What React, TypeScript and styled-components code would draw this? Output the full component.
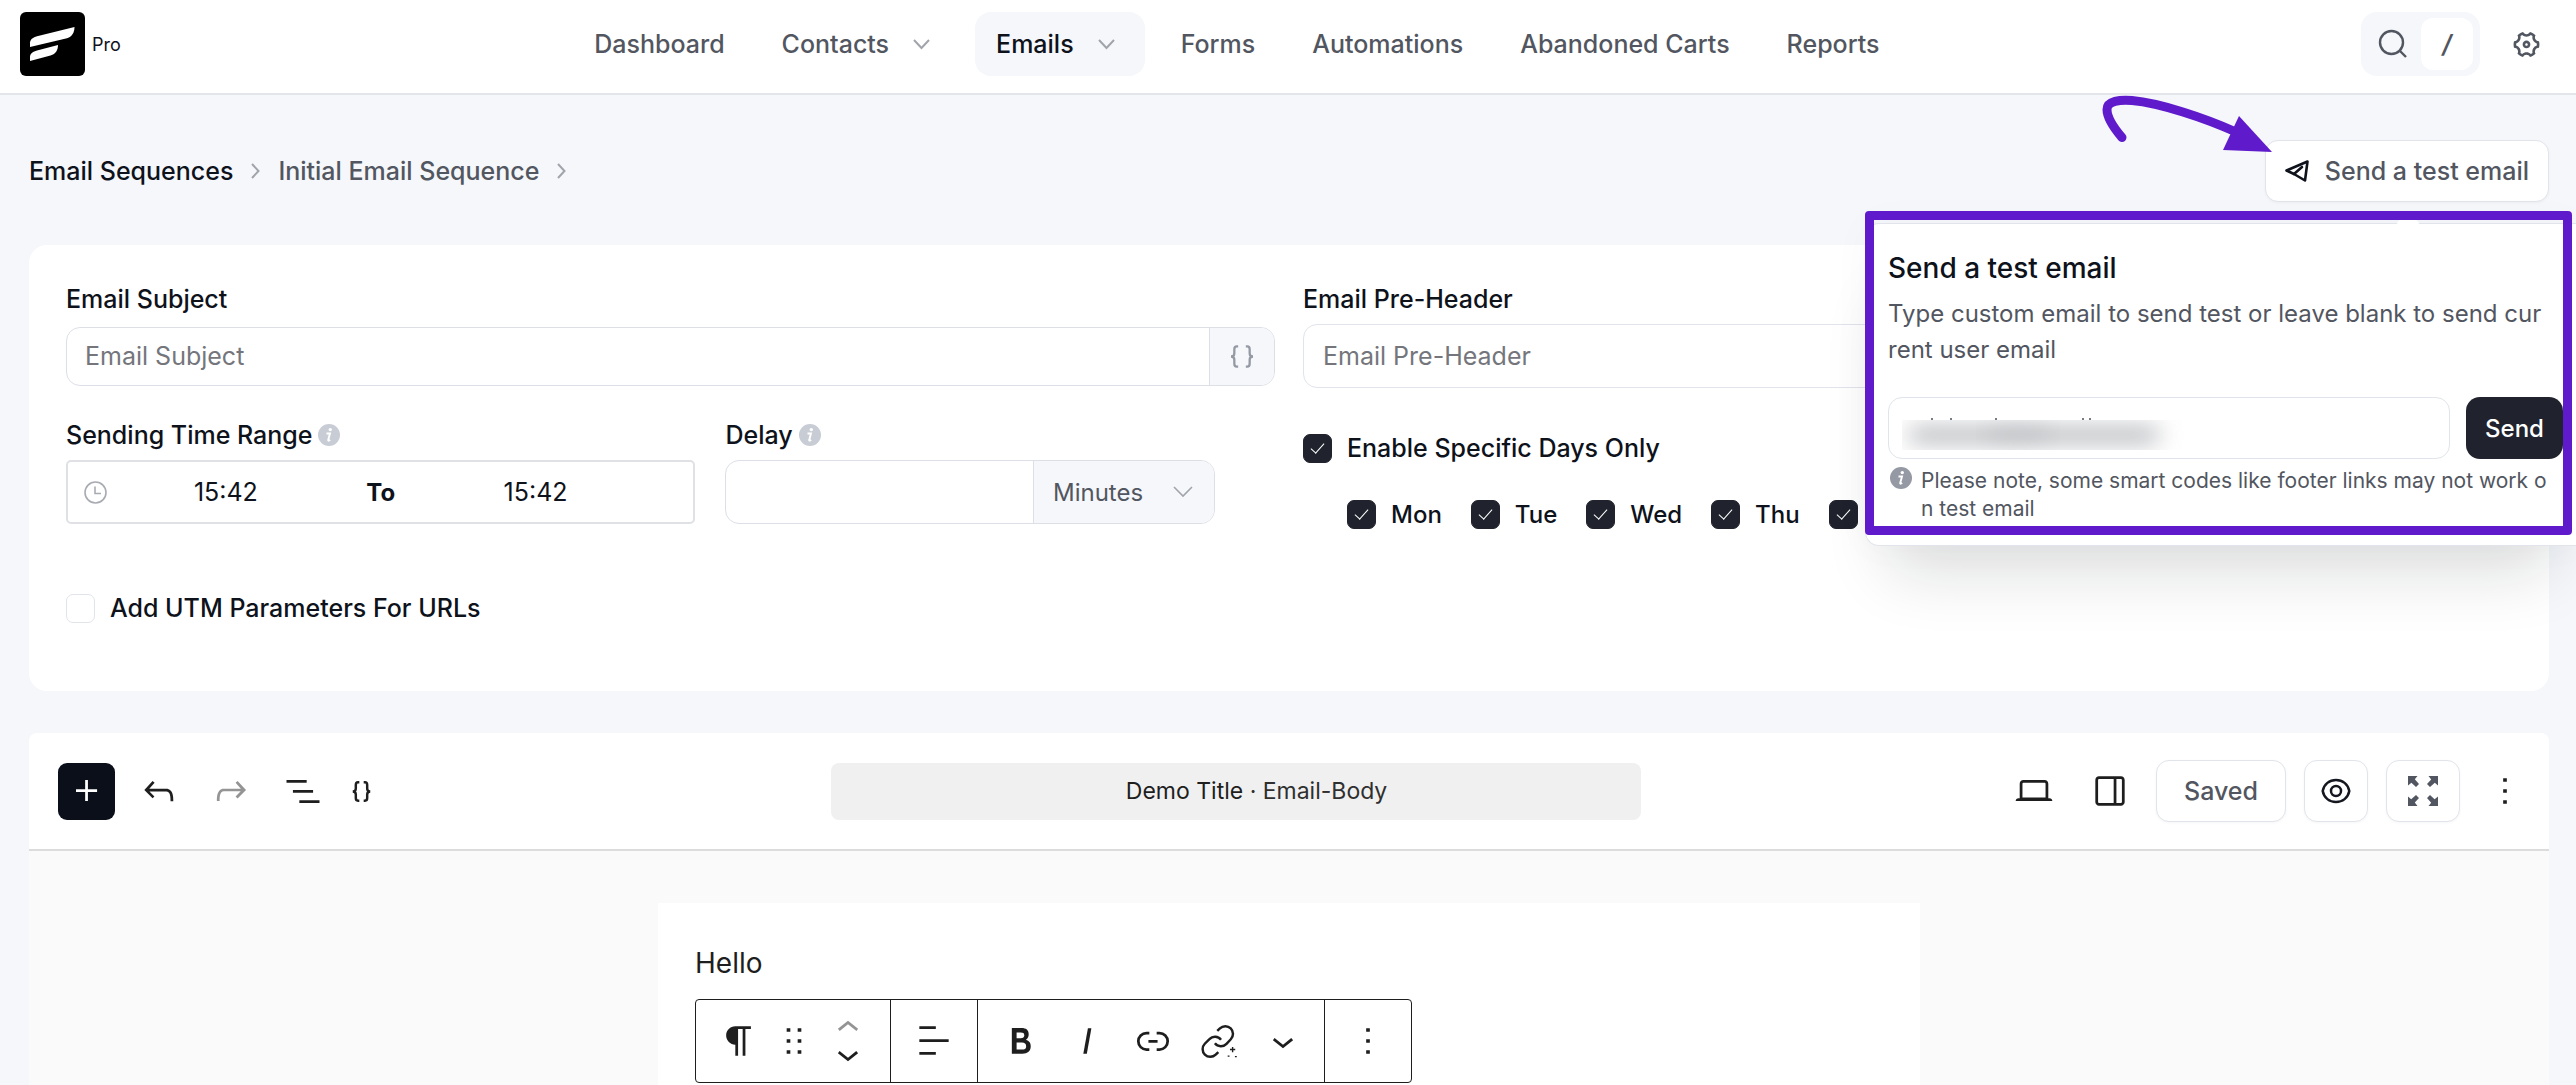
import React from 'react';
import styled, { createGlobalStyle } from 'styled-components';
import { RiSettings3Line } from 'react-icons/ri';

const color = {
  ink: '#0e121b',
  text: '#525660',
  muted: '#a1a4ab',
  line: '#e1e4ea',
  soft: '#f5f7fb',
  dark: '#20232d',
  accent: '#5f1bcb',
};

const GlobalStyle = createGlobalStyle`
  *, *::before, *::after { box-sizing: border-box; }
  body {
    margin: 0;
    background: ${color.soft};
    color: ${color.ink};
    font-family: Inter, "Liberation Sans", sans-serif;
    font-size: 25px;
  }
  button, input, select { font: inherit; color: inherit; margin: 0; }
  button { padding: 0; border: 0; background: none; cursor: pointer; }
  a { color: inherit; text-decoration: none; }
`;

const Page = styled.div`
  display: flex;
  flex-direction: column;
  height: 100vh;
  overflow: hidden;
`;

/* Header */

const Header = styled.header`
  display: flex;
  align-items: center;
  justify-content: space-between;
  flex: none;
  padding: 12px 22px 17px 20px;
  background: #fff;
  border-bottom: 2px solid #e4e5ea;
`;

const Brand = styled.a`
  display: flex;
  align-items: center;
  gap: 7px;
  font-size: 18px;
`;

const Nav = styled.nav`
  display: flex;
  gap: 15px;
  margin-right: 8px;
`;

const NavItem = styled.a<{ $active?: boolean }>`
  display: flex;
  align-items: center;
  height: 64px;
  padding: 0 21px;
  border-radius: 16px;
  font-weight: 500;
  color: ${(p) => (p.$active ? color.ink : color.text)};
  background: ${(p) => (p.$active ? color.soft : 'transparent')};

  svg { margin: 0 9px 0 24px; }
`;

const HeaderTools = styled.div`
  display: flex;
  align-items: center;
  gap: 20px;
`;

const SearchButton = styled.button`
  display: flex;
  align-items: center;
  gap: 13px;
  height: 64px;
  padding: 0 7px 0 17px;
  border-radius: 16px;
  background: ${color.soft};
  color: ${color.text};
`;

const KeyHint = styled.kbd`
  display: grid;
  place-items: center;
  width: 52px;
  height: 52px;
  border-radius: 12px;
  background: #fff;
  font-family: inherit;
  font-style: italic;
  font-weight: 600;
`;

const GearButton = styled.button`
  display: grid;
  place-items: center;
  width: 54px;
  height: 54px;
  color: ${color.text};

  svg { transform: rotate(90deg); }
`;

/* Content column */

const Main = styled.main`
  display: flex;
  flex: 1;
  flex-direction: column;
  min-height: 0;
  padding: 45px 27px 0 29px;
`;

const TopBar = styled.div`
  display: flex;
  align-items: center;
  justify-content: space-between;
  flex: none;
`;

const Crumbs = styled.nav`
  display: flex;
  align-items: center;
  gap: 18px;
  font-weight: 500;
`;

const Crumb = styled.a<{ $current?: boolean }>`
  color: ${(p) => (p.$current ? color.text : color.ink)};
`;

const SendWrap = styled.div`
  position: relative;
`;

const OutlineButton = styled.button<{ $pad: number }>`
  display: flex;
  align-items: center;
  justify-content: center;
  gap: 16px;
  height: 62px;
  padding: 0 ${(p) => p.$pad}px;
  border: 1px solid ${color.line};
  border-radius: 13px;
  background: #fff;
  color: ${color.text};
  font-weight: 500;
  box-shadow: 0 1px 3px rgba(14, 18, 27, 0.04);
`;

const Swoosh = styled.svg`
  position: absolute;
  z-index: 3;
  right: 273px;
  top: -48px;
  pointer-events: none;
`;

const Popover = styled.section`
  position: absolute;
  z-index: 2;
  top: 83px;
  right: -27px;
  width: 711px;
  padding: 26px 13px 22px 22px;
  border: 1px solid ${color.line};
  border-right: 0;
  border-radius: 14px 0 0 14px;
  background: #fff;
  box-shadow: 0 50px 60px -24px rgba(14, 18, 27, 0.14), 0 0 40px rgba(14, 18, 27, 0.03);

  &::before {
    content: '';
    position: absolute;
    top: -9px;
    left: 534px;
    width: 16px;
    height: 16px;
    background: #fff;
    transform: rotate(45deg);
  }
`;

const Highlight = styled.div`
  position: absolute;
  inset: -13px 4px 10px -1px;
  border: 9px solid ${color.accent};
  border-radius: 4px;
  pointer-events: none;
`;

const PopTitle = styled.h2`
  margin: 0 0 10px;
  font-size: 28px;
  line-height: 36px;
  font-weight: 500;
`;

const PopText = styled.p`
  margin: 0 0 29px;
  font-size: 24px;
  line-height: 36px;
  color: ${color.text};
`;

const TextLine = styled.span`
  display: block;
  white-space: nowrap;
`;

const SendRow = styled.form`
  display: flex;
  gap: 16px;
`;

const AddressBox = styled.div`
  position: relative;
  flex: 1;
`;

const Redaction = styled.svg`
  position: absolute;
  left: 10px;
  top: 20px;
`;

const SolidButton = styled.button`
  width: 97px;
  height: 62px;
  border-radius: 14px;
  background: ${color.dark};
  color: #fff;
  font-size: 24px;
  font-weight: 500;
`;

const Note = styled.p`
  display: flex;
  gap: 9px;
  margin: 8px 0 0;
  font-size: 21px;
  line-height: 28px;
  color: ${color.text};

  svg { flex: none; margin: 0 0 0 2px; color: #9599a3; }
`;

/* Settings card */

const Card = styled.section`
  display: grid;
  grid-template-columns: 1fr 1fr;
  column-gap: 28px;
  row-gap: 29px;
  flex: none;
  margin-top: 43px;
  padding: 36px 37px 68px;
  border-radius: 18px;
  background: #fff;
`;

const Field = styled.div`
  display: flex;
  flex-direction: column;
  gap: 7px;
  min-width: 0;
`;

const Label = styled.label`
  display: flex;
  align-items: center;
  gap: 6px;
  line-height: 36px;
  font-weight: 500;

  svg { color: #c8ccd4; }
`;

const Control = styled.div`
  display: flex;
  align-items: center;
  height: 64px;
`;

const TextInput = styled.input<{ $h?: number }>`
  display: block;
  width: 100%;
  height: ${(p) => p.$h ?? 64}px;
  padding: 0 19px;
  border: 1px solid ${color.line};
  border-radius: 14px;
  background: #fff;
  outline: 0;

  &::placeholder { color: #74767c; opacity: 1; }
`;

const InputGroup = styled.div<{ $tall?: boolean }>`
  display: flex;
  width: 100%;
  height: ${(p) => (p.$tall ? 64 : 59)}px;
  border: 1px solid #dcdfe6;
  border-radius: 14px;
  overflow: hidden;
  background: #fff;
`;

const BareInput = styled.input`
  flex: 1;
  min-width: 0;
  padding: 0 18px;
  border: 0;
  outline: 0;
  background: transparent;

  &::placeholder { color: #74767c; opacity: 1; }
`;

const CodeButton = styled.button`
  display: grid;
  place-items: center;
  width: 65px;
  border-left: 1px solid #dcdfe6;
  background: ${color.soft};
  color: #9599a3;
`;

const Timing = styled.div`
  display: grid;
  grid-template-columns: 9fr 7fr;
  gap: 30px;
  padding-right: 60px;
`;

const TimeRange = styled.div`
  display: flex;
  align-items: center;
  height: 64px;
  width: 100%;
  padding: 0 39px 0 16px;
  border: 2px solid #dfe1e5;
  border-radius: 5px;
`;

const TimeInput = styled.input`
  flex: 1;
  min-width: 0;
  border: 0;
  outline: 0;
  text-align: center;
  background: transparent;
`;

const To = styled.span`
  width: 72px;
  text-align: center;
  font-size: 24px;
  font-weight: 700;
`;

const SelectBox = styled.div`
  position: relative;
  display: flex;
  align-items: center;
  width: 181px;
  border-left: 1px solid #dcdfe6;
  background: ${color.soft};
  color: ${color.text};

  svg { position: absolute; right: 21px; pointer-events: none; }
`;

const Select = styled.select`
  width: 100%;
  height: 100%;
  padding: 0 48px 0 19px;
  border: 0;
  outline: 0;
  appearance: none;
  background: transparent;
  font-size: 24px;
`;

const Days = styled.fieldset`
  display: flex;
  flex-direction: column;
  gap: 37px;
  margin: 0;
  padding: 17px 0 0;
  border: 0;
  min-width: 0;
`;

const DayRow = styled.div`
  display: flex;
  gap: 29px;
  padding-left: 44px;
  font-size: 24px;
`;

const CheckLabel = styled.label`
  display: flex;
  align-items: center;
  gap: 15px;
  line-height: 29px;
  font-weight: 500;
`;

const Checkbox = styled.input.attrs({ type: 'checkbox' })`
  display: grid;
  place-items: center;
  width: 29px;
  height: 29px;
  border: 1px solid ${color.line};
  border-radius: 7px;
  appearance: none;
  background: #fff;

  &:checked { border-color: ${color.dark}; background: ${color.dark}; }
  &:checked::after {
    content: '';
    width: 7px;
    height: 13px;
    margin-bottom: 4px;
    border: solid #fff;
    border-width: 0 1px 1px 0;
    transform: rotate(42deg);
  }
`;

const UtmRow = styled.div`
  grid-column: 1 / -1;
  padding-top: 36px;
`;

/* Editor */

const Editor = styled.section`
  display: flex;
  flex: 1;
  flex-direction: column;
  min-height: 0;
  margin-top: 42px;
  background: #fafafa;
  border-radius: 8px 8px 0 0;
`;

const EditorBar = styled.div`
  display: grid;
  grid-template-columns: minmax(0, 15fr) 810px minmax(0, 17fr);
  align-items: center;
  flex: none;
  height: 118px;
  border-bottom: 2px solid #dcdcdc;
  border-radius: 8px 8px 0 0;
  background: #fff;
`;

const BarSide = styled.div<{ $end?: boolean }>`
  display: flex;
  align-items: center;
  gap: 8px;
  ${(p) => (p.$end ? 'justify-content: flex-end; padding-right: 17px;' : 'padding-left: 29px;')}
`;

const ActionGroup = styled.div`
  display: flex;
  align-items: center;
  gap: 18px;
`;

const Inserter = styled.button`
  display: grid;
  place-items: center;
  width: 57px;
  height: 57px;
  border-radius: 9px;
  background: #0b0f1a;
  color: #fff;
`;

const ToolList = styled.div`
  display: flex;
`;

const Tool = styled.button<{ $w?: number }>`
  display: flex;
  align-items: center;
  justify-content: center;
  width: ${(p) => p.$w ?? 66}px;
  height: 64px;
  color: #1e1e1e;

  svg { flex: none; }
  &:disabled { color: #949494; cursor: default; }
`;

const DocTitle = styled.button`
  height: 57px;
  padding-left: 42px;
  border-radius: 8px;
  background: #f0f0f0;
  color: #2f2f2f;
  font-size: 23px;
`;

const DocName = styled.span`
  color: #1e1e1e;
`;

const Paper = styled.article`
  width: 1262px;
  max-width: 100%;
  flex: 1;
  margin: 52px auto 0;
  padding: 40px 37px 0;
  background: #fff;
`;

const Paragraph = styled.p`
  margin: 0 0 16px;
  font-size: 28px;
  line-height: 40px;
  color: #1e1e1e;
`;

const BlockToolbar = styled.div`
  display: inline-flex;
  height: 84px;
  border: 1px solid #1e1e1e;
  border-radius: 4px;
  background: #fff;
`;

const Segment = styled.div`
  display: flex;
  align-items: center;
  padding: 0 10px;

  & + & { border-left: 1px solid #1e1e1e; }
`;

const Movers = styled.div`
  display: flex;
  flex-direction: column;

  ${Tool} { height: 26px; }
`;

/* Icons */

const Logo = () => (
  <svg width="65" height="64" viewBox="0 0 65 64" aria-hidden="true">
    <rect width="65" height="64" rx="6" fill="#000" />
    <path d="M10 35v-4.500c.5-3.500 3-5 7-6.300L54.500 15c0 5-2 9.500-7.500 11.200Z" fill="#fff" />
    <path d="M10 49v-4.500c.5-3.500 3-5 7-6.100L38 33c0 5-2 9-7.500 10.400Z" fill="#fff" />
  </svg>
);

const Chevron = ({ w = 17, h = 11, sw = 2 }) => (
  <svg width={w} height={h} viewBox={`0 0 ${w} ${h}`} fill="none" stroke={color.muted} strokeWidth={sw} aria-hidden="true">
    <path d={`M1 1L${w / 2} ${h - 2}L${w - 1} 1`} />
  </svg>
);

const CrumbArrow = () => (
  <svg width="9" height="16" viewBox="0 0 9 16" fill="none" stroke={color.muted} strokeWidth="2" aria-hidden="true">
    <path d="M1 1l6.500 7L1 15" />
  </svg>
);

const SearchIcon = () => (
  <svg width="30" height="30" viewBox="0 0 30 30" fill="none" stroke="currentColor" strokeWidth="2.400" aria-hidden="true">
    <circle cx="13.500" cy="13.500" r="11.500" />
    <path d="M21.500 21.500L28 28" />
  </svg>
);

const PlaneIcon = () => (
  <svg width="24" height="22" viewBox="0 0 24 22" fill="none" stroke={color.ink} strokeWidth="2.600" strokeLinejoin="round" strokeLinecap="round" aria-hidden="true">
    <path d="M1.500 10.500L22.500 1.500L20 20.500L9 14Z" />
    <path d="M9 14L17 7" />
  </svg>
);

const InfoIcon = () => (
  <svg width="22" height="22" viewBox="0 0 22 22" aria-hidden="true">
    <circle cx="11" cy="11" r="11" fill="currentColor" />
    <circle cx="12.300" cy="5.600" r="1.700" fill="#fff" />
    <path d="M8.500 9.500h3.500L10.200 16c-.2 1 .8.8 2 0" fill="none" stroke="#fff" strokeWidth="1.900" />
  </svg>
);

const ClockIcon = () => (
  <svg width="23" height="23" viewBox="0 0 23 23" fill="none" stroke="#a8abb2" strokeWidth="1.600" aria-hidden="true">
    <circle cx="11.500" cy="11.500" r="10.500" />
    <path d="M11 5.500V12.500H17" />
  </svg>
);

const BracesIcon = ({ gap = 6, h = 23, sw = 2.4 }) => (
  <svg width={20 + gap} height={h} viewBox={`0 0 ${20 + gap} 24`} fill="none" stroke="currentColor" strokeWidth={sw} aria-hidden="true">
    <path d="M9 1.500H7.500C5.500 1.500 5 3 5 4.500V8.500C5 10.500 4 12 1.500 12C4 12 5 13.500 5 15.500V19.500C5 21 5.500 22.500 7.500 22.500H9" />
    <path
      transform={`translate(${20 + gap} 0) scale(-1 1)`}
      d="M9 1.500H7.500C5.500 1.500 5 3 5 4.500V8.500C5 10.500 4 12 1.500 12C4 12 5 13.500 5 15.500V19.500C5 21 5.500 22.500 7.500 22.500H9"
    />
  </svg>
);

const Glyph = ({ d, size = 44 }: { d: string; size?: number }) => (
  <svg width={size} height={size} viewBox="0 0 24 24" fill="currentColor" fillRule="evenodd" aria-hidden="true">
    <path d={d} />
  </svg>
);

const glyphs = {
  plus: 'M11 12.500V17.500H12.500V12.500H17.500V11H12.500V6H11V11H6V12.500H11Z',
  undo: 'M18.300 11.700c-.6-.6-1.400-.9-2.300-.9H6.700l2.900-3.300-1.100-1-4.500 5L8.500 16l1-1-2.700-2.700H16c.5 0 .9.2 1.300.5 1 1 1 3.400 1 4.500v.3h1.500v-.2c0-1.500 0-4.300-1.500-5.700z',
  redo: 'M15.600 6.500l-1.100 1 2.900 3.300H8c-.9 0-1.700.3-2.300.9-1.400 1.500-1.400 4.200-1.400 5.600v.2h1.500v-.3c0-1.100 0-3.500 1-4.500.3-.3.7-.5 1.300-.5h9.200L14.500 15l1.100 1.100 4.600-4.600-4.600-5z',
  list: 'M3 6h11v1.500H3V6Zm3.500 5.500h11V13h-11v-1.500ZM21 17H10v1.500h11V17Z',
  laptop: 'M20.500 16h-.7V8c0-1.100-.9-2-2-2H6.200c-1.100 0-2 .9-2 2v8h-.7c-.8 0-1.500.7-1.500 1.500h20c0-.8-.7-1.500-1.500-1.500zM5.700 8c0-.3.2-.5.5-.5h11.600c.3 0 .5.2.5.5v7.600H5.700V8z',
  drawer: 'M18 4H6c-1.100 0-2 .9-2 2v12c0 1.100.9 2 2 2h12c1.100 0 2-.9 2-2V6c0-1.100-.9-2-2-2zm-4 14.500H6c-.3 0-.5-.2-.5-.5V6c0-.3.2-.5.5-.5h8v13zm4.500-.5c0 .3-.2.5-.5.5h-2.500v-13H18c.3 0 .5.2.5.5v12z',
  more: 'M13 19h-2v-2h2v2zm0-6h-2v-2h2v2zm0-6h-2V5h2v2z',
  paragraph: 'm9.996 14v-.225v6.225h1.500v-14.500h2.500v14.500h1.500v-14.500h3v-1.500h-8.504c-2.761 0-5 2.239-5 5 0 2.761 2.239 5 5 5z',
  drag: 'M8 7h2V5H8v2zm0 6h2v-2H8v2zm0 6h2v-2H8v2zm6-14v2h2V5h-2zm0 8h2v-2h-2v2zm0 6h2v-2h-2v2z',
  up: 'M6.500 12.400L12 8l5.500 4.400-.9 1.200L12 10l-4.500 3.600-1-1.200z',
  down: 'M17.500 11.600L12 16l-5.500-4.400.9-1.200L12 14l4.500-3.600 1 1.200z',
  align: 'M13 5.500H4V4h9v1.500Zm7 7H4V11h16v1.500Zm-7 7H4V18h9v1.500Z',
  bold: 'M14.700 11.300c1-.6 1.500-1.600 1.500-3 0-2.300-1.300-3.400-4-3.400H7v14h5.800c1.400 0 2.500-.3 3.300-1 .8-.7 1.200-1.700 1.200-2.900.1-1.900-.8-3.100-2.600-3.700zm-5.100-4h2.300c.6 0 1.100.1 1.400.4.3.3.5.7.5 1.200s-.2 1-.5 1.200c-.3.3-.8.4-1.400.4H9.600V7.300zm4.600 9c-.4.3-1 .4-1.700.4H9.600v-3.900h2.900c.7 0 1.300.2 1.700.5.4.3.6.8.6 1.500s-.2 1.200-.6 1.500z',
  italic: 'M12.500 5L10 19h1.900l2.500-14z',
  link: 'M10 17.389H8.444A5.194 5.194 0 1 1 8.444 7H10v1.500H8.444a3.694 3.694 0 0 0 0 7.389H10v1.500ZM14 7h1.556a5.194 5.194 0 0 1 0 10.390H14v-1.500h1.556a3.694 3.694 0 0 0 0-7.390H14V7Zm-4.500 6h5v-1.500h-5V13Z',
};

const SmartLinkIcon = () => (
  <svg width="37" height="37" viewBox="0 0 24 24" fill="none" stroke="currentColor" strokeWidth="1.600" aria-hidden="true">
    <path d="M9 13.200a5 5 0 0 0 7.540.34l2.800-3a5 5 0 0 0-7.070-7.070l-1.720 1.710" />
    <path d="M13 10.800a5 5 0 0 0-7.540-.34l-3 3a5 5 0 0 0 7.070 7.070l1.710-1.710" />
    <path d="M20.500 15.500v3.400M18.800 17.200h3.400M17.300 21.500h1.200M22 21.800h1.200" strokeWidth="0.900" />
  </svg>
);

const EyeIcon = () => (
  <svg width="30" height="26" viewBox="0 0 30 26" fill="none" stroke="#14171f" strokeWidth="2.500" aria-hidden="true">
    <path d="M15 2C21.500 2 27 6 28.300 13C27 20 21.500 24 15 24C8.500 24 3 20 1.700 13C3 6 8.500 2 15 2Z" />
    <circle cx="15" cy="13" r="5" />
  </svg>
);

const ExpandIcon = () => (
  <svg width="30" height="30" viewBox="0 0 30 30" fill="currentColor" aria-hidden="true">
    {[0, 90, 180, 270].map((turn) => (
      <path key={turn} transform={`rotate(${turn} 15 15)`} d="M0 0H9.500L6.800 3.200L11 8L8 11L3.400 6.800L0 9.500Z" />
    ))}
  </svg>
);

const navItems = [
  { label: 'Dashboard' },
  { label: 'Contacts', menu: true },
  { label: 'Emails', menu: true, active: true },
  { label: 'Forms' },
  { label: 'Automations' },
  { label: 'Abandoned Carts' },
  { label: 'Reports' },
];

const days = ['Mon', 'Tue', 'Wed', 'Thu'];

export default function App() {
  return (
    <Page>
      <GlobalStyle />
      <Header>
        <Brand href="#">
          <Logo />
          Pro
        </Brand>
        <Nav>
          {navItems.map((item) => (
            <NavItem key={item.label} href="#" $active={item.active}>
              {item.label}
              {item.menu && <Chevron />}
            </NavItem>
          ))}
        </Nav>
        <HeaderTools>
          <SearchButton type="button" aria-label="Search">
            <SearchIcon />
            <KeyHint>/</KeyHint>
          </SearchButton>
          <GearButton type="button" aria-label="Settings">
            <RiSettings3Line size={31} />
          </GearButton>
        </HeaderTools>
      </Header>

      <Main>
        <TopBar>
          <Crumbs aria-label="Breadcrumb">
            <Crumb href="#">Email Sequences</Crumb>
            <CrumbArrow />
            <Crumb href="#" $current>
              Initial Email Sequence
            </Crumb>
            <CrumbArrow />
          </Crumbs>
          <SendWrap>
            <OutlineButton type="button" $pad={19}>
              <PlaneIcon />
              Send a test email
            </OutlineButton>
            <Swoosh width="176" height="64" viewBox="0 0 176 64" aria-hidden="true">
              <path
                d="M22 45.500C13 35 7 26 7 17.500C7 9 20 7.500 32 8.500C60 11 105 26 136 40"
                fill="none"
                stroke={color.accent}
                strokeWidth="9"
                strokeLinecap="round"
              />
              <path d="M139 24L172 60L123 58Z" fill={color.accent} />
            </Swoosh>
            <Popover>
              <PopTitle>Send a test email</PopTitle>
              <PopText>
                <TextLine>Type custom email to send test or leave blank to send cur</TextLine>
                <TextLine>rent user email</TextLine>
              </PopText>
              <SendRow>
                <AddressBox>
                  <TextInput type="email" aria-label="Test email address" $h={62} />
                  <Redaction width="290" height="36" viewBox="0 0 290 36" aria-hidden="true">
                    <defs>
                      <filter id="smear" x="-20%" y="-100%" width="140%" height="300%">
                        <feGaussianBlur stdDeviation="12 9" />
                      </filter>
                      <clipPath id="band">
                        <rect x="4" y="3" width="286" height="30" />
                      </clipPath>
                    </defs>
                    <path d="M33 2h2M52 2h2M97 2h2M184 2h2M191 2h2" stroke="#777b83" strokeWidth="2" />
                    <g clipPath="url(#band)" fill="#8f9298">
                      <rect x="12" y="5" width="248" height="26" opacity="0.420" filter="url(#smear)" />
                      <rect x="90" y="5" width="60" height="22" opacity="0.180" filter="url(#smear)" />
                    </g>
                  </Redaction>
                </AddressBox>
                <SolidButton type="button">Send</SolidButton>
              </SendRow>
              <Note>
                <InfoIcon />
                <span>
                  <TextLine>Please note, some smart codes like footer links may not work o</TextLine>
                  <TextLine>n test email</TextLine>
                </span>
              </Note>
              <Highlight />
            </Popover>
          </SendWrap>
        </TopBar>

        <Card>
          <Field>
            <Label htmlFor="subject">Email Subject</Label>
            <Control>
              <InputGroup>
                <BareInput id="subject" placeholder="Email Subject" />
                <CodeButton type="button" aria-label="Insert smart code">
                  <BracesIcon />
                </CodeButton>
              </InputGroup>
            </Control>
          </Field>
          <Field>
            <Label htmlFor="preheader">Email Pre-Header</Label>
            <Control>
              <TextInput id="preheader" placeholder="Email Pre-Header" />
            </Control>
          </Field>

          <Timing>
            <Field>
              <Label htmlFor="from">
                Sending Time Range <InfoIcon />
              </Label>
              <TimeRange>
                <ClockIcon />
                <TimeInput id="from" defaultValue="15:42" />
                <To>To</To>
                <TimeInput aria-label="Until" defaultValue="15:42" />
              </TimeRange>
            </Field>
            <Field>
              <Label htmlFor="delay">
                Delay <InfoIcon />
              </Label>
              <InputGroup $tall>
                <BareInput id="delay" />
                <SelectBox>
                  <Select aria-label="Delay unit" defaultValue="minutes">
                    <option value="minutes">Minutes</option>
                  </Select>
                  <Chevron w={20} h={12} sw={1.6} />
                </SelectBox>
              </InputGroup>
            </Field>
          </Timing>
          <Days>
            <CheckLabel>
              <Checkbox defaultChecked />
              Enable Specific Days Only
            </CheckLabel>
            <DayRow>
              {days.map((day) => (
                <CheckLabel key={day}>
                  <Checkbox defaultChecked />
                  {day}
                </CheckLabel>
              ))}
              <Checkbox defaultChecked aria-label="Friday" />
            </DayRow>
          </Days>

          <UtmRow>
            <CheckLabel>
              <Checkbox />
              Add UTM Parameters For URLs
            </CheckLabel>
          </UtmRow>
        </Card>

        <Editor>
          <EditorBar>
            <BarSide>
              <Inserter type="button" aria-label="Add block">
                <Glyph d={glyphs.plus} />
              </Inserter>
              <ToolList>
                <Tool type="button" $w={72} aria-label="Undo">
                  <Glyph d={glyphs.undo} />
                </Tool>
                <Tool type="button" $w={72} aria-label="Redo" disabled>
                  <Glyph d={glyphs.redo} />
                </Tool>
                <Tool type="button" $w={72} aria-label="Document overview">
                  <Glyph d={glyphs.list} />
                </Tool>
                <Tool type="button" $w={44} aria-label="Smart codes">
                  <BracesIcon gap={3} h={21} sw={2.8} />
                </Tool>
              </ToolList>
            </BarSide>
            <DocTitle type="button">
              <DocName>Demo Title</DocName> · Email-Body
            </DocTitle>
            <BarSide $end>
              <ToolList>
                <Tool type="button" $w={76} aria-label="Preview device">
                  <Glyph d={glyphs.laptop} />
                </Tool>
                <Tool type="button" $w={76} aria-label="Toggle sidebar">
                  <Glyph d={glyphs.drawer} />
                </Tool>
              </ToolList>
              <ActionGroup>
                <OutlineButton type="button" $pad={27}>
                  Saved
                </OutlineButton>
                <OutlineButton type="button" $pad={16} aria-label="Preview">
                  <EyeIcon />
                </OutlineButton>
                <OutlineButton type="button" $pad={21} aria-label="Full screen">
                  <ExpandIcon />
                </OutlineButton>
                <Tool type="button" $w={54} aria-label="Options">
                  <Glyph d={glyphs.more} />
                </Tool>
              </ActionGroup>
            </BarSide>
          </EditorBar>

          <Paper>
            <Paragraph>Hello</Paragraph>
            <BlockToolbar>
              <Segment>
                <Tool type="button" aria-label="Paragraph">
                  <Glyph d={glyphs.paragraph} />
                </Tool>
                <Tool type="button" $w={44} aria-label="Drag">
                  <Glyph d={glyphs.drag} />
                </Tool>
                <Movers>
                  <Tool type="button" $w={64} aria-label="Move up" disabled>
                    <Glyph d={glyphs.up} />
                  </Tool>
                  <Tool type="button" $w={64} aria-label="Move down">
                    <Glyph d={glyphs.down} />
                  </Tool>
                </Movers>
              </Segment>
              <Segment>
                <Tool type="button" aria-label="Align">
                  <Glyph d={glyphs.align} />
                </Tool>
              </Segment>
              <Segment>
                <Tool type="button" aria-label="Bold">
                  <Glyph d={glyphs.bold} />
                </Tool>
                <Tool type="button" aria-label="Italic">
                  <Glyph d={glyphs.italic} />
                </Tool>
                <Tool type="button" aria-label="Link">
                  <Glyph d={glyphs.link} />
                </Tool>
                <Tool type="button" aria-label="Smart link">
                  <SmartLinkIcon />
                </Tool>
                <Tool type="button" $w={62} aria-label="More formatting">
                  <Glyph d={glyphs.down} />
                </Tool>
              </Segment>
              <Segment>
                <Tool type="button" aria-label="Block options">
                  <Glyph d={glyphs.more} />
                </Tool>
              </Segment>
            </BlockToolbar>
          </Paper>
        </Editor>
      </Main>
    </Page>
  );
}
